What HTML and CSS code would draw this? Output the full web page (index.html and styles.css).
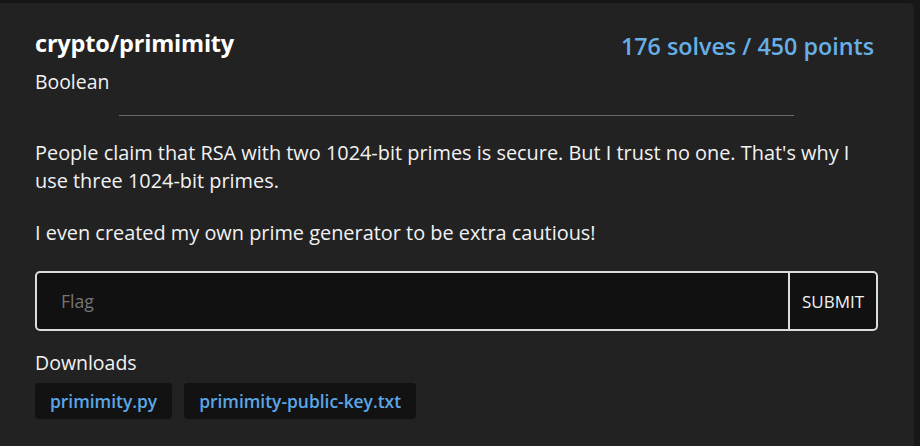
FILE: index.html
```html
<!DOCTYPE html>
<html lang="en">
<head>
<meta charset="utf-8">
<title>crypto/primimity</title>
<link rel="stylesheet" href="styles.css">
</head>
<body>
<div class="card">
  <div class="head">
    <div class="titles">
      <div class="title">crypto/primimity</div>
      <div class="author">Boolean</div>
    </div>
    <div class="stats">176 solves / 450 points</div>
  </div>
  <hr class="rule">
  <div class="desc">
    <p>People claim that RSA with two 1024-bit primes is secure. But I trust no one. That's why I use three 1024-bit primes.</p>
    <p>I even created my own prime generator to be extra cautious!</p>
  </div>
  <form class="flag-form">
    <input class="flag-input" type="text" placeholder="Flag">
    <button class="submit" type="button">SUBMIT</button>
  </form>
  <div class="downloads-label">Downloads</div>
  <div class="downloads">
    <a class="chip" href="#">primimity.py</a>
    <a class="chip" href="#">primimity-public-key.txt</a>
  </div>
</div>
</body>
</html>
```
FILE: styles.css
```css
html, body {
  margin: 0;
  padding: 0;
  background: #171717;
  height: 100%;
  overflow: hidden;
}
body {
  font-family: "Open Sans", "Noto Sans", sans-serif;
  color: #f2f2f2;
}
.card {
  margin: 3px 6px 0 0;
  background: #222222;
  border-radius: 0 5px 0 0;
  padding: 24px 36px 30px 35px;
  height: 446px;
  box-sizing: border-box;
}
.head {
  display: flex;
  justify-content: space-between;
  align-items: flex-start;
}
.title {
  font-size: 23.5px;
  font-weight: 700;
  line-height: 32px;
  color: #ffffff;
  letter-spacing: -0.2px;
}
.author {
  font-size: 19.4px;
  line-height: 26px;
  margin-top: 10px;
}
.stats {
  font-size: 23.3px;
  font-weight: 600;
  line-height: 32px;
  color: #68afe7;
  margin-top: 3px;
  margin-right: 4px;
}
.rule {
  width: 80%;
  border: 0;
  border-top: 1px solid #6a6a6a;
  margin: 20px auto 23px;
}
.desc p {
  margin: 0 0 24px;
  font-size: 19.9px;
  line-height: 28px;
}
.desc p:last-child {
  margin-bottom: 0;
}
.flag-form {
  display: flex;
  height: 60px;
  border: 2px solid #dcdcdc;
  border-radius: 5px;
  background: #111111;
  box-sizing: border-box;
  margin-top: 24px;
  overflow: hidden;
}
.flag-input {
  flex: 1;
  background: transparent;
  border: 0;
  outline: none;
  padding: 0 24px;
  font-family: inherit;
  font-size: 17.6px;
  color: #eee;
}
.flag-input::placeholder {
  color: #767676;
}
.submit {
  width: 88px;
  border: 0;
  border-left: 2px solid #dcdcdc;
  background: transparent;
  color: #f2f2f2;
  font-family: inherit;
  font-size: 17px;
  padding: 0;
}
.downloads-label {
  font-size: 19.5px;
  line-height: 26px;
  margin-top: 19px;
}
.downloads {
  display: flex;
  gap: 12px;
  margin-top: 7px;
}
.chip {
  display: block;
  background: #121212;
  border-radius: 4px;
  padding: 6px 15px;
  line-height: 24px;
  font-size: 17.4px;
  font-weight: 600;
  color: #5ba7e6;
  text-decoration: none;
}
```
